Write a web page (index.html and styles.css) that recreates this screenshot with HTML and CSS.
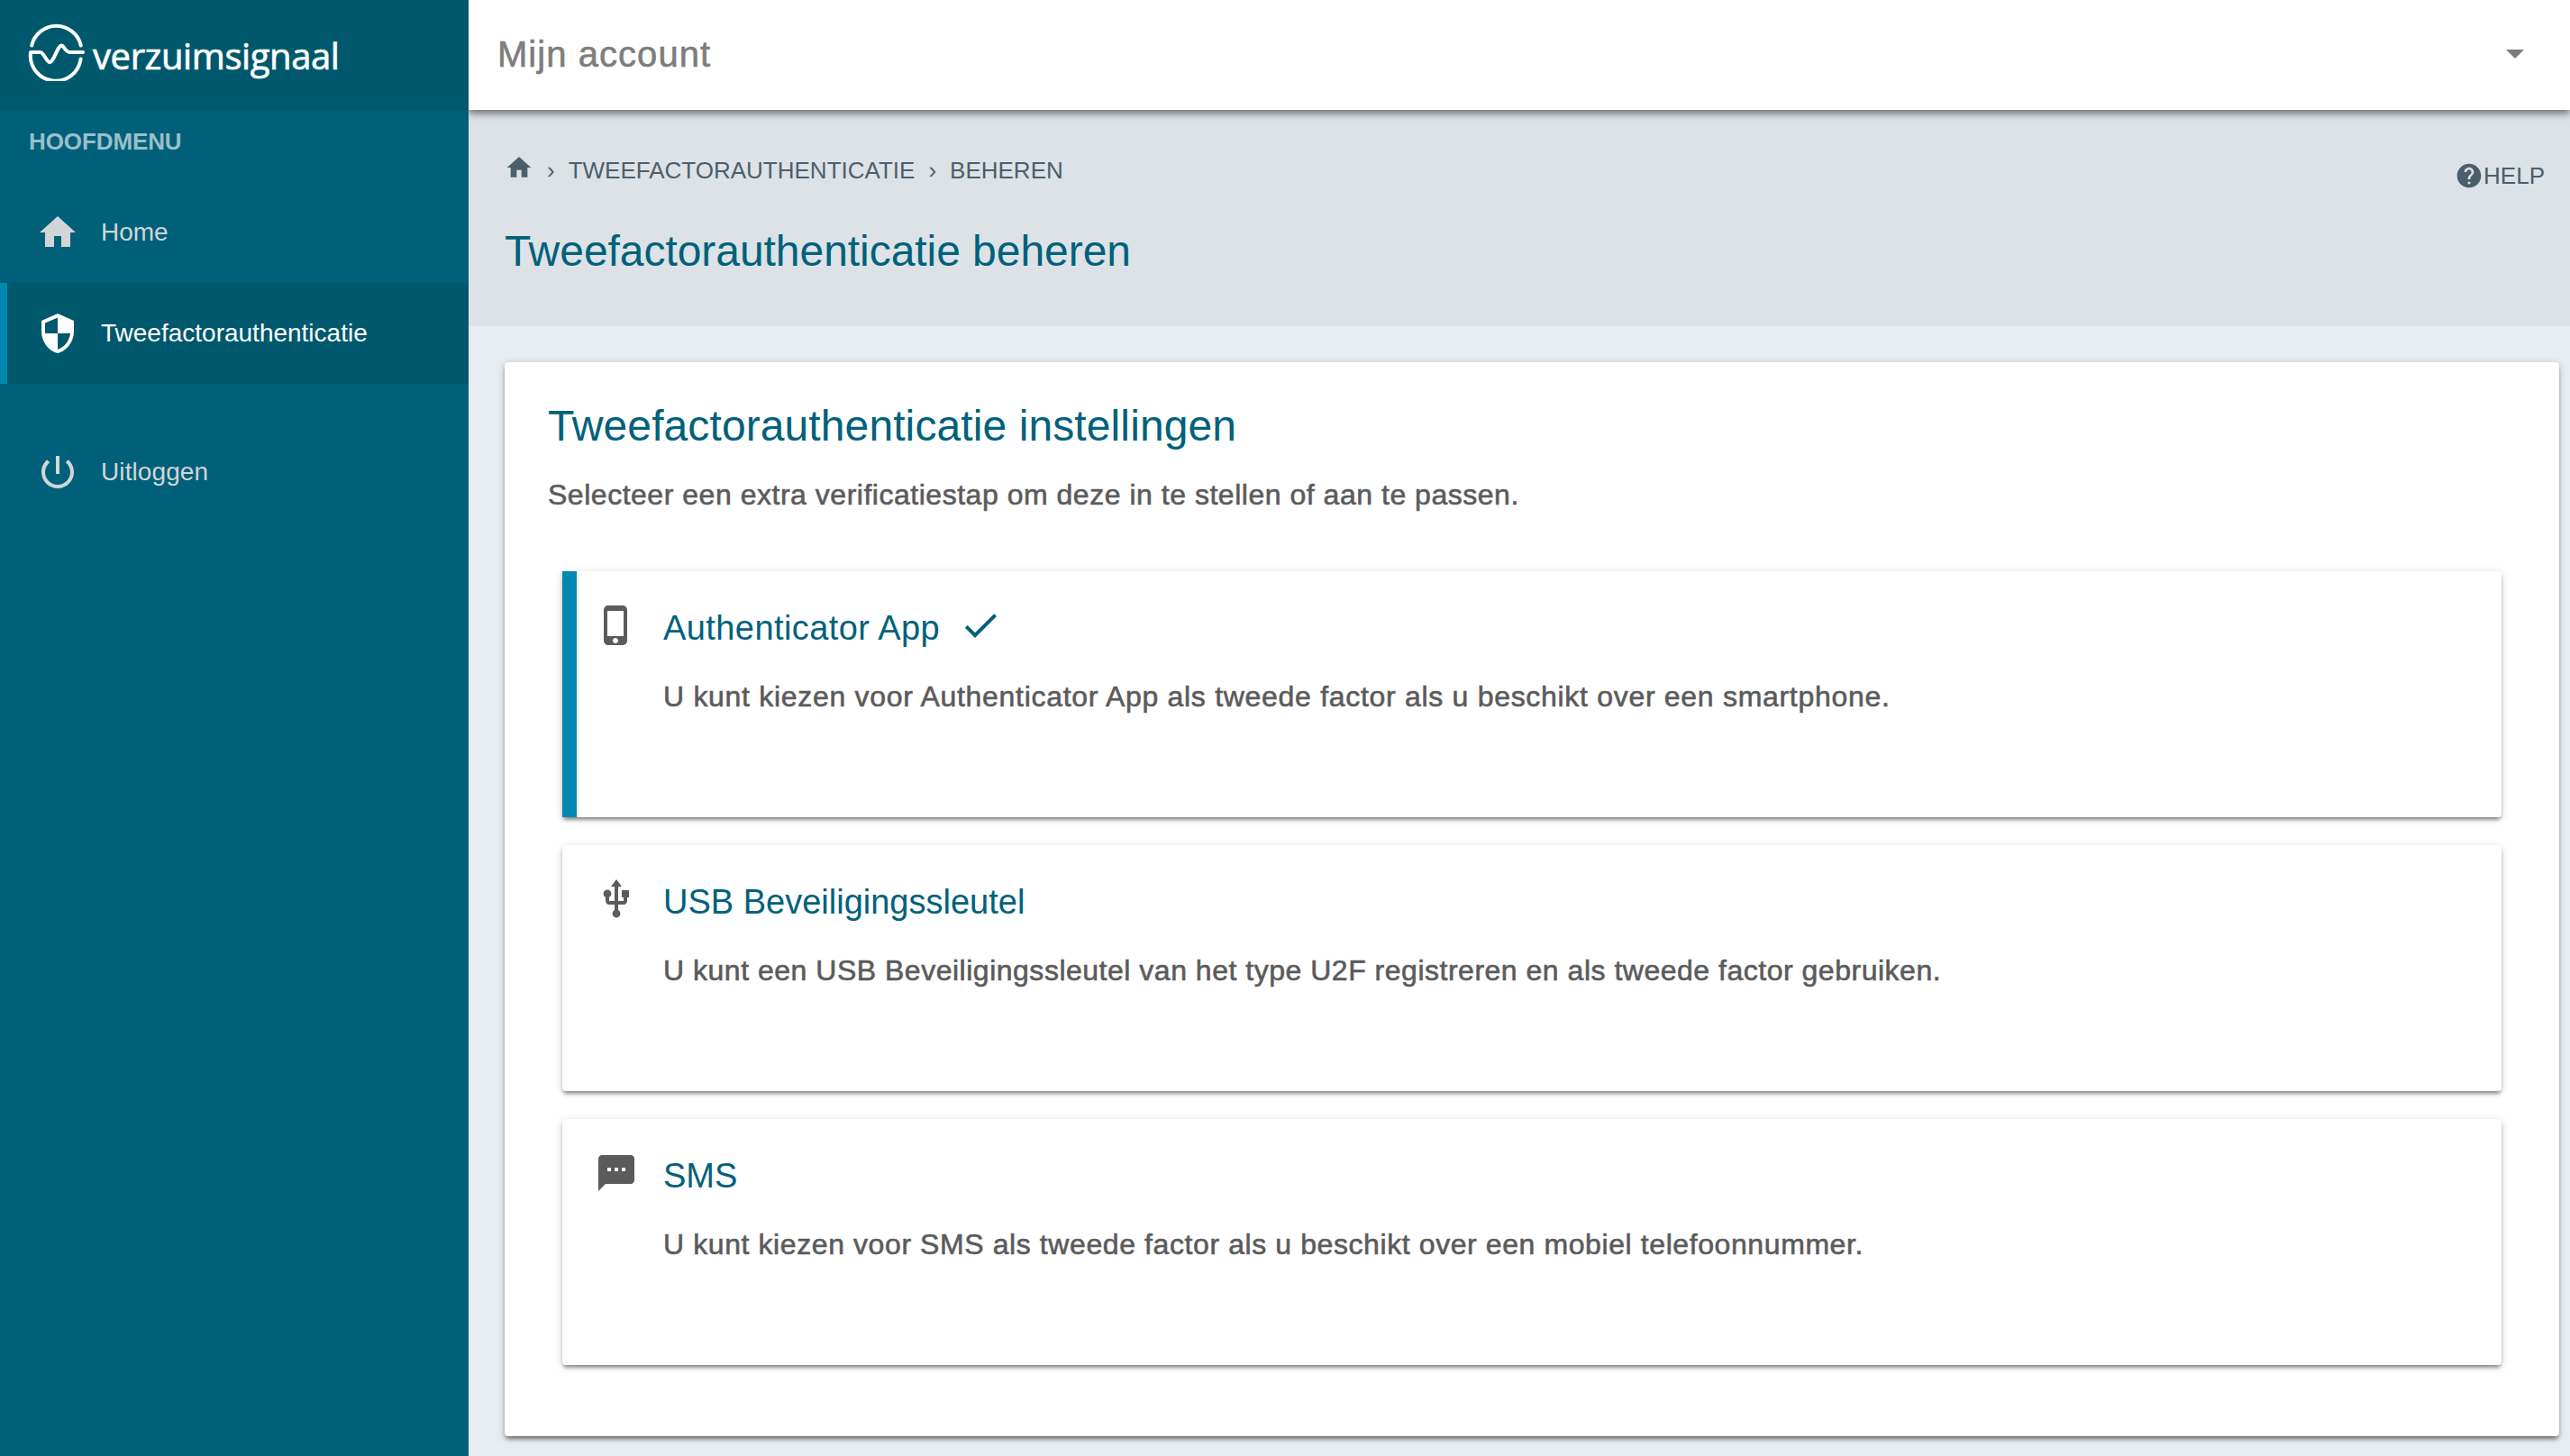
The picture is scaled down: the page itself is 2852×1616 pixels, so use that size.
FILE: index.html
```
<!DOCTYPE html>
<html lang="nl">
<head>
  <meta charset="UTF-8">
  <meta name="viewport" content="width=device-width, initial-scale=1.0">
  <title>Tweefactorauthenticatie beheren</title>
  <link rel="stylesheet" href="styles.css">
</head>
<body>

  <aside class="sidebar">
    <div class="logo">
      <svg class="logo-mark" viewBox="30 26 66 64">
        <path d="M35.2 50.5A28 28 0 0 1 89.8 50.5"/>
        <path d="M89.6 65.5A28 28 0 0 1 34 58H44.5C49 58 51.5 69 55.2 69C59.5 69 64 50.5 68.4 50.5C71.6 50.5 71.5 58 78.5 58H92"/>
      </svg>
      <span class="logo-text">verzuimsignaal</span>
    </div>
    <div class="menu-title">HOOFDMENU</div>
    <nav>
      <a class="menu-item">
        <svg class="icon" viewBox="0 0 24 24"><path d="M10 20v-6h4v6h5v-8h3L12 3 2 12h3v8z"/></svg>
        <span>Home</span>
      </a>
      <a class="menu-item active">
        <svg class="icon" viewBox="0 0 24 24"><path d="M12 1L3 5v6c0 5.55 3.84 10.74 9 12 5.16-1.26 9-6.45 9-12V5l-9-4zm0 10.99h7c-.53 4.12-3.28 7.79-7 8.94V12H5V6.3l7-3.11v8.8z"/></svg>
        <span>Tweefactorauthenticatie</span>
      </a>
      <a class="menu-item logout">
        <svg class="icon" viewBox="0 0 24 24"><path d="M13 3h-2v10h2V3zm4.83 2.17l-1.42 1.42C17.99 7.86 19 9.81 19 12c0 3.87-3.13 7-7 7s-7-3.13-7-7c0-2.19 1.01-4.14 2.58-5.42L6.17 5.17C4.23 6.82 3 9.26 3 12c0 4.97 4.03 9 9 9s9-4.03 9-9c0-2.74-1.23-5.18-3.17-6.83z"/></svg>
        <span>Uitloggen</span>
      </a>
    </nav>
  </aside>

  <div class="main">
    <header class="topbar">
      <span class="topbar-title">Mijn account</span>
      <svg class="icon" viewBox="0 0 24 24"><path d="M7 10l5 5 5-5z"/></svg>
    </header>

    <div class="page-header">
      <div>
        <div class="breadcrumb">
          <svg class="icon-small" viewBox="0 0 24 24"><path d="M10 20v-6h4v6h5v-8h3L12 3 2 12h3v8z"/></svg>
          <span>›</span>
          <span>TWEEFACTORAUTHENTICATIE</span>
          <span>›</span>
          <span>BEHEREN</span>
        </div>
        <h1>Tweefactorauthenticatie beheren</h1>
      </div>
      <a class="help">
        <svg class="icon-small" viewBox="0 0 24 24"><path d="M12 2C6.48 2 2 6.48 2 12s4.48 10 10 10 10-4.48 10-10S17.52 2 12 2zm1 17h-2v-2h2v2zm2.07-7.75l-.9.92C13.45 12.9 13 13.5 13 15h-2v-.5c0-1.1.45-2.1 1.17-2.83l1.24-1.26c.37-.36.59-.86.59-1.41 0-1.1-.9-2-2-2s-2 .9-2 2H8c0-2.21 1.79-4 4-4s4 1.79 4 4c0 .88-.36 1.68-.93 2.25z"/></svg>
        <span>HELP</span>
      </a>
    </div>

    <div class="content">
      <div class="card">
        <h2>Tweefactorauthenticatie instellingen</h2>
        <p class="intro">Selecteer een extra verificatiestap om deze in te stellen of aan te passen.</p>

        <div class="options">
          <div class="option app selected">
            <svg class="icon" viewBox="0 0 24 24"><path d="M15.5 1h-8C6.12 1 5 2.12 5 3.5v17C5 21.88 6.12 23 7.5 23h8c1.38 0 2.5-1.12 2.5-2.5v-17C18 2.12 16.88 1 15.5 1zm-4 21c-.83 0-1.5-.67-1.5-1.5s.67-1.5 1.5-1.5 1.5.67 1.5 1.5-.67 1.5-1.5 1.5zm4.5-4H7V4h9v14z"/></svg>
            <div>
              <h3>
                <span>Authenticator App</span>
                <svg class="icon check" viewBox="0 0 24 24"><path d="M9 16.17L4.83 12l-1.42 1.41L9 19 21 7l-1.41-1.41z"/></svg>
              </h3>
              <p>U kunt kiezen voor Authenticator App als tweede factor als u beschikt over een smartphone.</p>
            </div>
          </div>

          <div class="option usb">
            <svg class="icon" viewBox="0 0 24 24"><path d="M15 7v4h1v2h-3V5h2l-3-4-3 4h2v8H8v-2.07c.7-.37 1.2-1.08 1.2-1.93 0-1.21-.99-2.2-2.2-2.2-1.21 0-2.2.99-2.2 2.2 0 .85.5 1.56 1.2 1.93V13c0 1.11.89 2 2 2h3v3.05c-.71.37-1.2 1.1-1.2 1.95 0 1.22.99 2.2 2.2 2.2 1.21 0 2.2-.98 2.2-2.2 0-.85-.49-1.58-1.2-1.95V15h3c1.11 0 2-.89 2-2v-2h1V7h-4z"/></svg>
            <div>
              <h3>USB Beveiligingssleutel</h3>
              <p>U kunt een USB Beveiligingssleutel van het type U2F registreren en als tweede factor gebruiken.</p>
            </div>
          </div>

          <div class="option sms">
            <svg class="icon" viewBox="0 0 24 24"><path d="M20 2H4c-1.1 0-1.99.9-1.99 2L2 22l4-4h14c1.1 0 2-.9 2-2V4c0-1.1-.9-2-2-2zM9 11H7V9h2v2zm4 0h-2V9h2v2zm4 0h-2V9h2v2z"/></svg>
            <div>
              <h3>SMS</h3>
              <p>U kunt kiezen voor SMS als tweede factor als u beschikt over een mobiel telefoonnummer.</p>
            </div>
          </div>
        </div>
      </div>
    </div>
  </div>

</body>
</html>
```
FILE: styles.css
```
* {
  box-sizing: border-box;
}
body {
  margin: 0;
  display: flex;
  height: 100vh;
  overflow: hidden;
  font-family: "Helvetica Neue", "Liberation Sans", Arial, sans-serif;
  background-color: #e8edf1;
}
h1, h2, h3, p {
  margin: 0;
  font-weight: normal;
}
.icon {
  width: 48px;
  height: 48px;
  flex: none;
  fill: currentColor;
}
.icon-small {
  width: 32px;
  height: 32px;
  flex: none;
  fill: currentColor;
}

/* sidebar */
.sidebar {
  width: 520px;
  flex: none;
  background-color: #006079;
  color: #d1d5d8;
}
.logo {
  display: flex;
  align-items: center;
  gap: 7px;
  height: 122px;
  padding-left: 30px;
  background-color: #00586d;
  color: #ffffff;
}
.logo-mark {
  width: 66px;
  height: 64px;
  margin-bottom: 6px;
  fill: none;
  stroke: #ffffff;
  stroke-width: 4;
  stroke-linecap: round;
  stroke-linejoin: round;
}
.logo-text {
  font-family: "Open Sans", sans-serif;
  font-size: 40px;
  font-weight: 500;
  letter-spacing: -0.4px;
  -webkit-text-stroke: 0.7px currentColor;
}
.menu-title {
  padding: 20px 32px 30px;
  line-height: 30px;
  font-size: 26px;
  font-weight: bold;
  letter-spacing: -0.1px;
  color: #99bfc9;
}
.menu-item {
  display: flex;
  align-items: center;
  gap: 24px;
  height: 112px;
  padding-left: 40px;
  font-size: 28px;
}
.menu-item.active {
  padding-left: 32px;
  border-left: 8px solid #0088b0;
  background-color: #00586d;
  color: #ffffff;
}
.menu-item.logout {
  margin-top: 42px;
  letter-spacing: 0.1px;
}

/* main column */
.main {
  flex: 1;
  display: flex;
  flex-direction: column;
  overflow: hidden;
}
.topbar {
  position: relative;
  display: flex;
  justify-content: space-between;
  align-items: center;
  height: 122px;
  padding: 0 37px 4px 32px;
  background-color: #ffffff;
  color: #7d7d7d;
  box-shadow: 0 2px 10px rgba(0, 0, 0, 0.2), 0 4px 8px rgba(0, 0, 0, 0.4);
}
.topbar-title {
  padding-top: 2px;
  font-size: 40px;
  letter-spacing: 1.05px;
  -webkit-text-stroke: 0.6px currentColor;
}
.page-header {
  display: flex;
  justify-content: space-between;
  align-items: flex-start;
  height: 240px;
  padding: 48px 28px 0 40px;
  background-color: #dde2e6;
}
.breadcrumb {
  display: flex;
  gap: 15px;
  height: 34px;
  font-size: 26px;
  color: #4a5f6b;
}
.breadcrumb span {
  margin-top: 4px;
  line-height: 30px;
}
h1 {
  margin-top: 47px;
  line-height: 56px;
  font-size: 48px;
  letter-spacing: -0.05px;
  color: #00617b;
}
.help {
  display: flex;
  align-items: center;
  margin-top: 8px;
  font-size: 26px;
  color: #4a5f6b;
}
.help span {
  padding-top: 2px;
}

/* settings card */
.content {
  flex: 1;
  padding: 40px 12px 22px 40px;
}
.card {
  height: 100%;
  padding: 43px 64px 0 48px;
  border-radius: 4px;
  background-color: #ffffff;
  box-shadow: 0 2px 10px rgba(0, 0, 0, 0.2), 0 4px 4px rgba(0, 0, 0, 0.14), 0 4px 4px -2px rgba(0, 0, 0, 0.4);
}
h2 {
  line-height: 56px;
  font-size: 48px;
  letter-spacing: 0.1px;
  color: #00617b;
}
.intro {
  margin-top: 28px;
  line-height: 40px;
  font-size: 32px;
  letter-spacing: 0.52px;
  color: #5b5b5b;
  -webkit-text-stroke: 0.6px currentColor;
}
.options {
  display: flex;
  flex-direction: column;
  gap: 31px;
  margin: 65px 0 0 16px;
}
.option {
  display: flex;
  gap: 28px;
  height: 273px;
  padding: 36px;
  border-radius: 4px;
  background-color: #ffffff;
  color: #5b5b5b;
  box-shadow: 0 2px 10px rgba(0, 0, 0, 0.15), 0 3px 4px rgba(0, 0, 0, 0.1), 0 4px 4px -2px rgba(0, 0, 0, 0.4);
}
.option.selected {
  padding-left: 20px;
  border-left: 16px solid #0088b0;
  border-radius: 0 4px 4px 0;
}
.option h3 {
  display: flex;
  gap: 21px;
  height: 46px;
  margin-top: 4px;
  line-height: 46px;
  font-size: 38px;
  color: #00617b;
}
.option p {
  margin-top: 33px;
  line-height: 40px;
  font-size: 32px;
  -webkit-text-stroke: 0.6px currentColor;
}
.check {
  margin-top: -4px;
}
.app h3 {
  letter-spacing: 0.42px;
}
.app p {
  letter-spacing: 0.7px;
}
.usb p {
  letter-spacing: 0.51px;
}
.sms p {
  letter-spacing: 0.59px;
}
```
